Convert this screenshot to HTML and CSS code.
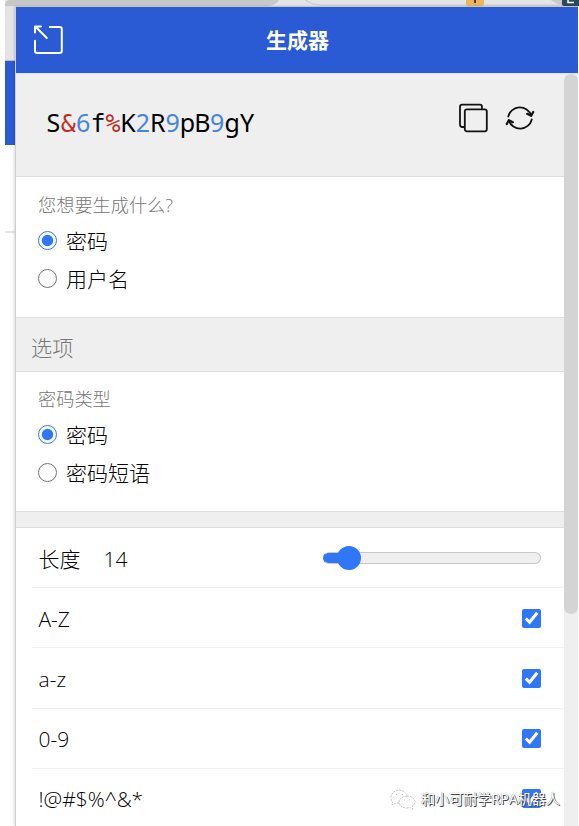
FILE: index.html
```html
<!DOCTYPE html>
<html lang="zh-CN">
<head>
    <meta charset="UTF-8">
    <meta name="viewport" content="width=device-width, initial-scale=1.0">
    <title>生成器</title>
    <link rel="stylesheet" href="styles.css">
</head>
<body>
    <!-- Browser window behind the popup -->
    <div class="browser">
        <div class="browser-tabs">
            <svg width="574" height="7" viewBox="0 0 574 7">
                <path d="M0 6V4Q1 1 4 0H274Q270 6 262 6Z" fill="#c8c8c8"/>
                <path d="M300 0Q307 5 315 5H565" fill="none" stroke="#c9c9c9"/>
                <path d="M546 0H574V6H562Q552 5 546 0Z" fill="#c9c9c9"/>
                <path d="M461 0H479V4Q479 6 477 6H463Q461 6 461 4Z" fill="#edb45f"/>
                <path d="M470 0V3" stroke="#4c4030" stroke-width="2"/>
                <path d="M557 0H574V6H559Q557 6 557 4Z" fill="#2c4a5c"/>
                <path d="M563 0V2.5H569" fill="none" stroke="#fff" stroke-width="1.5"/>
            </svg>
        </div>
        <div class="browser-toolbar"></div>
        <div class="browser-banner"></div>
        <div class="browser-content"></div>
    </div>

    <div class="popup">
        <div class="header">
            <svg class="popout-icon" width="30" height="30" viewBox="0 0 30 30">
                <path d="M15.8 2H25.5Q27.8 2 27.8 4.3V25.7Q27.8 28 25.5 28H3.3Q1 28 1 25.7V15.8"/>
                <path d="M12.8 13L1.8 2M1 7.6V1.6H7"/>
            </svg>
            <h1>生成器</h1>
        </div>

        <div class="body">
            <div class="content">
                <div class="result">
                    <div class="password"><span>S</span><span class="special">&amp;</span><span class="number">6</span><span class="mono">f</span><span class="special">%</span><span>K</span><span class="number">2</span><span>R</span><span class="number">9</span><span>p</span><span>B</span><span class="number">9</span><span>g</span><span>Y</span></div>
                    <div class="actions">
                        <svg width="30" height="30" viewBox="0 0 30 30">
                            <path d="M6 24H4.3Q2 24 2 21.7V4Q2 1.7 4.3 1.7H21.7Q24 1.7 24 4V6"/>
                            <rect x="6.8" y="6.3" width="22" height="22" rx="2"/>
                        </svg>
                        <svg width="30" height="30" viewBox="0 0 30 30">
                            <path d="M3.2 13.5A12 12 0 0 1 26.2 12.5M26.8 16.5A12 12 0 0 1 3.8 17.5"/>
                            <path d="M22.2 10.8L26.2 12.8L28.2 9M1.8 21L3.8 17.2L7.8 19.2" stroke-width="2.2"/>
                        </svg>
                    </div>
                </div>

                <div class="box">
                    <div class="label">您想要生成什么?</div>
                    <label class="radio"><input type="radio" name="type" checked><span>密码</span></label>
                    <label class="radio"><input type="radio" name="type"><span>用户名</span></label>
                </div>

                <h2 class="section-title">选项</h2>

                <div class="box">
                    <div class="label">密码类型</div>
                    <label class="radio"><input type="radio" name="passwordType" checked><span>密码</span></label>
                    <label class="radio"><input type="radio" name="passwordType"><span>密码短语</span></label>
                </div>

                <div class="spacer"></div>

                <div class="rows">
                    <div class="row">
                        <span>长度</span>
                        <span class="length">14</span>
                        <input type="range" min="5" max="128" value="14">
                    </div>
                    <label class="row"><span>A-Z</span><input type="checkbox" checked></label>
                    <label class="row"><span>a-z</span><input type="checkbox" checked></label>
                    <label class="row"><span>0-9</span><input type="checkbox" checked></label>
                    <label class="row"><span>!@#$%^&amp;*</span><input type="checkbox" checked></label>
                </div>
            </div>
            <div class="scrollbar"><div class="thumb"></div></div>
        </div>
    </div>

    <div class="watermark">
        <svg width="26" height="22" viewBox="0 0 26 22">
            <path d="M9 14Q6 14 4 15L2 16L2.5 13Q1 11 1 8Q2 2 9 1Q16 2 17 7" />
            <path d="M17 7Q9 8 9 13Q10 19 17 19Q19 19 20 18.5L23 20L22.5 17Q25 15 25 12Q23 7 17 7Z"/>
            <path d="M6 5.5H7M12 5.5H13M14 11H15M19 11H20"/>
        </svg>
        <span>和小可耐学RPA机器人</span>
    </div>
</body>
</html>
```

FILE: styles.css
```css
* {
    margin: 0;
    padding: 0;
    box-sizing: border-box;
}

body {
    position: relative;
    width: 579px;
    height: 826px;
    overflow: hidden;
    background: white;
    color: #000;
    font-family: "Open Sans", "Noto Sans CJK SC", sans-serif;
    font-size: 21px;
    font-weight: 300;
}

/* Page behind the popup */
.browser {
    position: absolute;
    top: 0;
    left: 5px;
    width: 574px;
}

.browser-tabs {
    height: 7px;
    background: #e4e4e4;
}

.browser-tabs svg {
    display: block;
}

.browser-toolbar {
    width: 11px;
    height: 54px;
    background: #e4e4e4;
    border-bottom: 1px solid #bbb;
}

.browser-banner {
    width: 11px;
    height: 84px;
    background: #2a5bd5;
}

.browser-content {
    width: 11px;
    height: 88px;
    border-bottom: 2px solid #e4e7eb;
}

.popup {
    position: relative;
    display: flex;
    flex-direction: column;
    width: 563px;
    height: 820px;
    margin: 6px 0 0 15px;
    border-top: 1px solid #c4c4c4;
    border-left: 1px solid #cfcfcf;
    background: white;
    box-shadow: -1px 0 2px rgba(0, 0, 0, 0.15);
}

.header {
    display: grid;
    grid-template-columns: 60px 1fr 60px;
    align-items: center;
    flex: none;
    height: 66px;
    padding-left: 18px;
    padding-right: 17px;
    background: #2a5bd5;
    color: white;
}

.header h1 {
    font-size: 21px;
    font-weight: 700;
    line-height: 66px;
    text-align: center;
}

.popout-icon {
    fill: none;
    stroke: white;
    stroke-width: 2;
    stroke-linecap: round;
    stroke-linejoin: round;
}

.body {
    display: flex;
    flex: 1;
    min-height: 0;
    border-top: 1px solid #dfe1e5;
}

.content {
    flex: 1;
    background: #efefef;
}

.result {
    display: flex;
    justify-content: space-between;
    height: 103px;
    padding: 28px 29px 0 30px;
}

.password {
    display: flex;
    height: 40px;
    font-family: "Noto Sans", sans-serif;
    font-size: 25px;
    font-weight: 400;
    line-height: 40px;
}

.password span {
    display: flex;
    justify-content: center;
    width: 14.9px;
}

.password .mono,
.password .special {
    font-family: "DejaVu Sans Mono", monospace;
    font-size: 25px;
    line-height: 43px;
}

.number {
    color: #4585df;
}

.special {
    color: #c02b22;
}

.actions {
    display: flex;
    gap: 17px;
}

.actions svg {
    margin-top: 1px;
    fill: none;
    stroke: #111;
    stroke-width: 1.8;
    stroke-linecap: round;
    stroke-linejoin: round;
}

.box {
    height: 141px;
    padding: 14px 23px 14px 22px;
    background: white;
    border-top: 1px solid #dedede;
    border-bottom: 1px solid #dedede;
}

/* second line of borders sits one pixel higher than the result area */
.result + .box {
    margin-top: -1px;
    height: 142px;
    padding-top: 15px;
}

.label {
    height: 30px;
    color: #777;
    font-size: 18.2px;
    line-height: 27px;
}

.radio {
    display: flex;
    align-items: center;
    height: 38px;
}

.radio input {
    width: 19px;
    height: 19px;
    margin-right: 9px;
    margin-top: -1px;
}

.radio span {
    line-height: 38px;
}

.section-title {
    height: 53px;
    padding-left: 15px;
    color: #777;
    font-size: 21.2px;
    font-weight: 300;
    line-height: 60px;
}

.spacer {
    height: 15px;
}

.rows {
    height: 300px;
    padding-left: 16px;
    background: white;
    border-top: 1px solid #dedede;
}

.row {
    display: flex;
    align-items: center;
    height: 60.2px;
    padding: 0 23px 0 6.5px;
    border-bottom: 1px solid #f0f0f0;
    font-size: 21px;
}

.row > span {
    padding-top: 2px;
    line-height: 56px;
}

.length {
    margin-left: 23px;
}

input {
    accent-color: #3077f8;
}

.row input[type="checkbox"] {
    width: 19px;
    height: 19px;
    margin-top: 1px;
    margin-left: auto;
}

.row input[type="range"] {
    width: 218px;
    height: 24px;
    margin-top: 1px;
    margin-left: auto;
    appearance: none;
    background: none;
}

.row input[type="range"]::-webkit-slider-runnable-track {
    height: 12px;
    background: linear-gradient(to right, #3077f8 25px, #efefef 25px) border-box;
    border: 1px solid #c8c8c8;
    border-left-color: #3077f8;
    border-radius: 6px;
}

.row input[type="range"]::-webkit-slider-thumb {
    appearance: none;
    width: 24px;
    height: 24px;
    margin-top: -7px;
    margin-left: -1px;
    background: #3077f8;
    border-radius: 50%;
}

.scrollbar {
    width: 14px;
    background: #efefef;
}

.thumb {
    height: 540px;
    background: #d4d4d4;
    border-radius: 7px;
}

.watermark {
    position: absolute;
    left: 390px;
    top: 786px;
    display: flex;
    align-items: center;
    gap: 5px;
    height: 25px;
    color: white;
    font-size: 14.1px;
    font-weight: 400;
    white-space: nowrap;
    text-shadow: 1px 1px 0 #444, 0 0 1px #666;
}

.watermark span {
    margin-top: -2px;
}

.watermark svg {
    margin-top: 3px;
    fill: white;
    stroke: #aaa;
    stroke-width: 0.7;
    stroke-dasharray: 2 1;
}
```
